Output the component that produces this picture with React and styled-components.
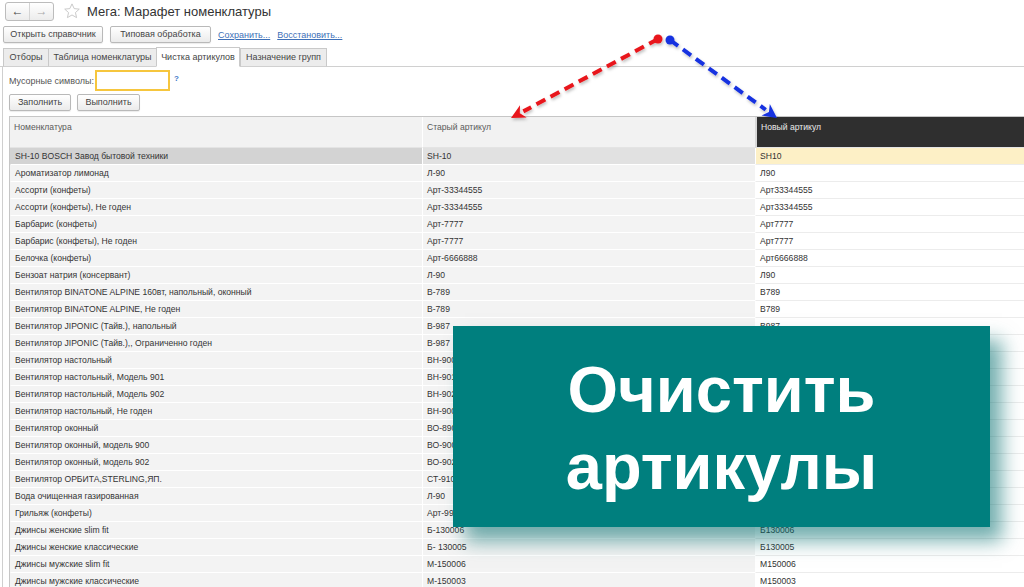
import React from 'react'
import styled, { createGlobalStyle } from 'styled-components'

const GlobalStyle = createGlobalStyle`
body {
    margin: 0;
    font-family: "Liberation Sans", Arial, sans-serif;
    background: #fff;
    overflow: hidden;
}
`

const Page = styled.div`
position: relative;
width: 1024px;
height: 587px;
overflow: hidden;
background: #fff;
color: #333;
`

const TitleBar = styled.div`
display: flex;
align-items: center;
height: 22px;
padding: 0 0 0 5px;
`

const NavGroup = styled.div`
display: flex;
height: 17px;
border: 1px solid #bcbcbc;
border-radius: 3px;
background: linear-gradient(#fff, #ececec);
`

const NavButton = styled.div`
width: 23px;
display: flex;
align-items: center;
justify-content: center;
font-size: 12px;
color: ${p => (p.$dim ? '#aaa' : '#444')};
& + & {
    border-left: 1px solid #d4d4d4;
}
`

const Star = styled.svg`
margin: 0 6px 0 9px;
`

const Title = styled.div`
font-size: 13px;
color: #333;
`

const Toolbar = styled.div`
display: flex;
align-items: center;
gap: 7px;
padding: 4px 0 0 3px;
height: 17px;
`

const Button = styled.div`
width: ${p => p.$w}px;
height: 15px;
box-sizing: content-box;
border: 1px solid #b9b9b9;
border-radius: 2px;
background: linear-gradient(#fff, #ebebeb);
font-size: 9px;
line-height: 15px;
text-align: center;
color: #444;
box-shadow: 0 1px 1px rgba(0, 0, 0, 0.08);
`

const Link = styled.a`
font-size: 9px;
color: #3e70b8;
text-decoration: underline;
`

const Tabs = styled.div`
display: flex;
align-items: flex-end;
padding: 5px 0 0 3px;
height: 18px;
border-bottom: 1px solid #d0d0d0;
`

const Tab = styled.div`
width: ${p => p.$w}px;
height: ${p => (p.$active ? 18 : 17)}px;
margin-bottom: -1px;
border: 1px solid #c9c9c9;
border-bottom: ${p => (p.$active ? '1px solid #fff' : '1px solid #d0d0d0')};
border-right: ${p => (p.$active ? '1px solid #c9c9c9' : 'none')};
background: ${p => (p.$active ? '#fff' : '#ececec')};
font-size: 9px;
text-align: center;
line-height: ${p => (p.$active ? 18 : 17)}px;
color: #444;
&:last-child {
    border-right: 1px solid #c9c9c9;
}
`

const Panel = styled.div`
border-left: 1px solid #cfcfcf;
margin-left: 2px;
padding: 3px 0 0 6px;
height: 530px;
`

const FieldRow = styled.div`
display: flex;
align-items: center;
height: 21px;
font-size: 9px;
color: #555;
`

const Input = styled.div`
width: 71px;
height: 17px;
margin-left: 1px;
border: 2px solid #f6c63e;
background: #fff;
`

const Hint = styled.span`
margin: -4px 0 0 4px;
font-size: 8px;
font-weight: bold;
color: #3e78c8;
`

const ButtonRow = styled.div`
display: flex;
gap: 6px;
padding-top: 3px;
height: 19px;
`

const Table = styled.div`
margin-top: 3px;
display: grid;
grid-template-columns: 412px 333px 300px;
grid-template-rows: 31px;
grid-auto-rows: 17px;
border-top: 1px solid #c6c6c6;
border-left: 1px solid #c6c6c6;
font-size: 8.6px;
`

const HeadCell = styled.div`
padding: 5px 0 0 4px;
box-sizing: border-box;
background: ${p => (p.$dark ? '#2f2f2f' : '#f2f2f2')};
color: ${p => (p.$dark ? '#eaeaea' : '#5a5a5a')};
border-left: ${p => (p.$dark ? '2px solid #d8d8d8' : '1px solid #fff')};
border-bottom: 1px solid #e4e4e4;
&:first-child {
    border-left: none;
}
`

const Cell = styled.div`
padding-left: 4px;
line-height: 16px;
white-space: nowrap;
overflow: hidden;
color: #333;
background: ${p => p.$bg};
border-bottom: 1px solid ${p => p.$line};
border-left: 1px solid ${p => (p.$first ? 'transparent' : '#fff')};
`

const Overlay = styled.svg`
position: absolute;
left: 0;
top: 0;
pointer-events: none;
`

const Banner = styled.div`
position: absolute;
left: 453px;
top: 326px;
width: 537px;
height: 201px;
box-sizing: border-box;
padding-top: 2px;
background: #007f7e;
box-shadow: 12px 14px 18px rgba(0, 110, 110, 0.55);
display: flex;
flex-direction: column;
align-items: center;
justify-content: center;
color: #fff;
font-size: 65px;
font-weight: bold;
line-height: 77px;
`

const rows = [
    ['SH-10 BOSCH Завод бытовой техники', 'SH-10', 'SH10'],
    ['Ароматизатор лимонад', 'Л-90', 'Л90'],
    ['Ассорти (конфеты)', 'Арт-33344555', 'Арт33344555'],
    ['Ассорти (конфеты), Не годен', 'Арт-33344555', 'Арт33344555'],
    ['Барбарис (конфеты)', 'Арт-7777', 'Арт7777'],
    ['Барбарис (конфеты), Не годен', 'Арт-7777', 'Арт7777'],
    ['Белочка (конфеты)', 'Арт-6666888', 'Арт6666888'],
    ['Бензоат натрия (консервант)', 'Л-90', 'Л90'],
    ['Вентилятор BINATONE ALPINE 160вт, напольный, оконный', 'В-789', 'В789'],
    ['Вентилятор BINATONE ALPINE, Не годен', 'В-789', 'В789'],
    ['Вентилятор JIPONIC (Тайв.), напольный', 'В-987', 'В987'],
    ['Вентилятор JIPONIC (Тайв.),, Ограниченно годен', 'В-987', 'В987'],
    ['Вентилятор настольный', 'ВН-900', 'ВН900'],
    ['Вентилятор настольный, Модель 901', 'ВН-901', 'ВН901'],
    ['Вентилятор настольный, Модель 902', 'ВН-902', 'ВН902'],
    ['Вентилятор настольный, Не годен', 'ВН-900', 'ВН900'],
    ['Вентилятор оконный', 'ВО-890', 'ВО890'],
    ['Вентилятор оконный, модель 900', 'ВО-900', 'ВО900'],
    ['Вентилятор оконный, модель 902', 'ВО-902', 'ВО902'],
    ['Вентилятор ОРБИТА,STERLING,ЯП.', 'СТ-910', 'СТ910'],
    ['Вода очищенная газированная', 'Л-90', 'Л90'],
    ['Грильяж (конфеты)', 'Арт-999', 'Арт999'],
    ['Джинсы женские slim fit', 'Б-130006', 'Б130006'],
    ['Джинсы женские классические', 'Б- 130005', 'Б130005'],
    ['Джинсы мужские slim fit', 'М-150006', 'М150006'],
    ['Джинсы мужские классические', 'М-150003', 'М150003'],
]

const Arrow = ({ x1, y1, x2, y2, color, id }) => {
    const a = Math.atan2(y2 - y1, x2 - x1)
    const len = 14
    const w = 7
    const bx = x2 - Math.cos(a) * len
    const by = y2 - Math.sin(a) * len
    const px = -Math.sin(a) * w
    const py = Math.cos(a) * w
    return (
        <g filter={`url(#${id})`}>
            <line x1={x1} y1={y1} x2={bx} y2={by} stroke={color} strokeWidth="4" strokeDasharray="10 6" />
            <circle cx={x1} cy={y1} r="4.5" fill={color} />
            <polygon points={`${x2},${y2} ${bx + px},${by + py} ${bx + Math.cos(a) * 4},${by + Math.sin(a) * 4} ${bx - px},${by - py}`} fill={color} />
        </g>
    )
}

const App = () => (
    <Page>
        <GlobalStyle />
        <TitleBar>
            <NavGroup>
                <NavButton>&#8592;</NavButton>
                <NavButton $dim>&#8594;</NavButton>
            </NavGroup>
            <Star width="18" height="18" viewBox="0 0 24 24">
                <path d="M12 2.5l2.9 6.3 6.8.7-5.1 4.6 1.5 6.7L12 17.3l-6.1 3.5 1.5-6.7-5.1-4.6 6.8-.7z" fill="none" stroke="#c4c4c4" strokeWidth="1.2" strokeLinejoin="round" />
            </Star>
            <Title>Мега: Марафет номенклатуры</Title>
        </TitleBar>
        <Toolbar>
            <Button $w={98}>Открыть справочник</Button>
            <Button $w={99}>Типовая обработка</Button>
            <Link>Сохранить...</Link>
            <Link>Восстановить...</Link>
        </Toolbar>
        <Tabs>
            <Tab $w={44}>Отборы</Tab>
            <Tab $w={107}>Таблица номенклатуры</Tab>
            <Tab $w={82} $active>Чистка артикулов</Tab>
            <Tab $w={85}>Назначение групп</Tab>
        </Tabs>
        <Panel>
            <FieldRow>
                Мусорные символы:
                <Input />
                <Hint>?</Hint>
            </FieldRow>
            <ButtonRow>
                <Button $w={60}>Заполнить</Button>
                <Button $w={61}>Выполнить</Button>
            </ButtonRow>
            <Table>
                <HeadCell>Номенклатура</HeadCell>
                <HeadCell>Старый артикул</HeadCell>
                <HeadCell $dark>Новый артикул</HeadCell>
                {rows.map((r, i) => {
                    const sel = i === 0
                    return (
                        <React.Fragment key={i}>
                            <Cell $first $bg={sel ? '#d3d3d3' : '#f3f3f3'} $line="#fff">{r[0]}</Cell>
                            <Cell $bg={sel ? '#e1e1e1' : '#f3f3f3'} $line="#fff">{r[1]}</Cell>
                            <Cell $bg={sel ? '#fdf0c6' : '#fff'} $line="#ececec">{r[2]}</Cell>
                        </React.Fragment>
                    )
                })}
            </Table>
        </Panel>
        <Overlay width="1024" height="587">
            <defs>
                <filter id="glowRed" x="-20%" y="-20%" width="140%" height="140%">
                    <feDropShadow dx="1" dy="2" stdDeviation="1.5" floodColor="#000" floodOpacity="0.25" />
                </filter>
                <filter id="glowBlue" x="-20%" y="-20%" width="140%" height="140%">
                    <feDropShadow dx="1" dy="2" stdDeviation="1.5" floodColor="#000" floodOpacity="0.25" />
                </filter>
            </defs>
            <Arrow id="glowRed" x1={658} y1={39} x2={511} y2={118} color="#e8161b" />
            <Arrow id="glowBlue" x1={670} y1={40} x2={777} y2={118} color="#1530e0" />
        </Overlay>
        <Banner>
            <div>Очистить</div>
            <div>артикулы</div>
        </Banner>
    </Page>
)

export default App
